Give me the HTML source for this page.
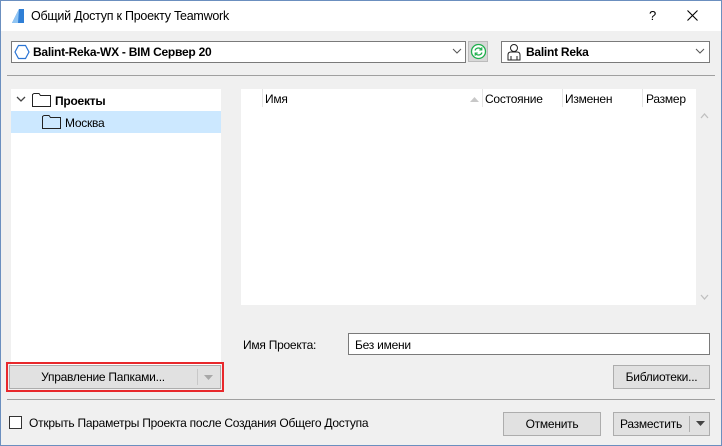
<!DOCTYPE html>
<html><head><meta charset="utf-8"><style>
*{box-sizing:border-box;margin:0;padding:0}
body{width:722px;height:446px;overflow:hidden;background:#f0f0f0;font-family:"Liberation Sans",sans-serif;font-size:12px;color:#000;position:relative;letter-spacing:-0.25px}
.a{position:absolute}
.win{left:0;top:0;width:722px;height:446px;border:1px solid #6b8fbf}
.tb{left:1px;top:1px;width:720px;height:30px;background:#fff}
.combo{background:#fff;border:1px solid #7a7a7a}
.btn{background:#e1e1e1;border:1px solid #adadad;text-align:center;line-height:22px}
.hdr{font-size:12px;top:92px;color:#000}
.div{width:1px;background:#e5e5e5;top:89px;height:18px}
</style></head><body>
<div class="a win"></div>
<div class="a tb"></div>
<svg class="a" style="left:10px;top:8px" width="16" height="16" viewBox="0 0 16 16"><path d="M2 15 L9 1 L14 1 L14 15 Z" fill="#2f7fd6"/><path d="M2 15 L9 1 L8 15Z" fill="#8fc4f3"/></svg>
<div class="a" style="left:31px;top:9px;font-size:12.5px;color:#000">Общий Доступ к Проекту Teamwork</div>
<div class="a" style="left:649px;top:8px;font-size:13px">?</div>
<svg class="a" style="left:687px;top:10px" width="11" height="11"><path d="M0.5 0.5L10.5 10.5M10.5 0.5L0.5 10.5" stroke="#000" stroke-width="1.1"/></svg>

<div class="a combo" style="left:11px;top:41px;width:455px;height:22px"></div>
<svg class="a" style="left:14px;top:44px" width="16" height="16"><path d="M4.5 1.5H11.5L15 8L11.5 14.5H4.5L1 8Z" fill="none" stroke="#2a74d4" stroke-width="1.2"/></svg>
<div class="a" style="left:33px;top:45px;font-weight:bold;font-size:12px">Balint-Reka-WX - BIM Сервер 20</div>
<svg class="a" style="left:452px;top:48px" width="10" height="7"><path d="M1 1L5 5L9 1" fill="none" stroke="#555"/></svg>
<div class="a" style="left:468px;top:41px;width:20px;height:21px;background:#d8d8d8;border:1px solid #bcbcbc"></div>
<svg class="a" style="left:470px;top:43px" width="17" height="17"><circle cx="8.5" cy="8.5" r="7" fill="#fff" stroke="#1fae4c" stroke-width="1.3"/><path d="M5 7.5A3.7 3.7 0 0 1 11.5 6.5M12 9.5A3.7 3.7 0 0 1 5.5 10.5" fill="none" stroke="#1fae4c" stroke-width="1.2"/><path d="M11.8 4.2V7H9.2M5.2 12.8V10H7.8" fill="none" stroke="#1fae4c" stroke-width="1.1"/></svg>
<div class="a combo" style="left:501px;top:41px;width:209px;height:22px"></div>
<svg class="a" style="left:506px;top:43px" width="16" height="18"><circle cx="8" cy="5" r="3.5" fill="none" stroke="#222"/><path d="M2 17V12Q2 9 5 9H11Q14 9 14 12V17Z M5 13V17M11 13V17" fill="none" stroke="#222"/></svg>
<div class="a" style="left:526px;top:45px;font-weight:bold">Balint Reka</div>
<svg class="a" style="left:695px;top:48px" width="10" height="7"><path d="M1 1L5 5L9 1" fill="none" stroke="#555"/></svg>

<div class="a" style="left:7px;top:75px;width:708px;height:1px;background:#a0a0a0"></div>

<div class="a" style="left:11px;top:89px;width:210px;height:298px;background:#fff"></div>
<div class="a" style="left:11px;top:111px;width:210px;height:22px;background:#cce8ff"></div>
<svg class="a" style="left:16px;top:96px" width="10" height="7"><path d="M1 1L5 5L9 1" fill="none" stroke="#444" stroke-width="1.3"/></svg>
<svg class="a" style="left:32px;top:92px" width="19" height="15"><path d="M0.5 2.5V14.5H18.5V3.5H8.5L7 1.5H2Z" fill="none" stroke="#222"/></svg>
<div class="a" style="left:55px;top:94px;font-weight:bold">Проекты</div>
<svg class="a" style="left:42px;top:114px" width="19" height="15"><path d="M0.5 2.5V14.5H18.5V3.5H8.5L7 1.5H2Z" fill="none" stroke="#222"/></svg>
<div class="a" style="left:65px;top:116px">Москва</div>

<div class="a" style="left:241px;top:89px;width:455px;height:216px;background:#fff"></div>
<div class="a" style="left:696px;top:107px;width:17px;height:198px;background:#f0f0f0"></div>
<div class="a div" style="left:262px"></div>
<div class="a div" style="left:482px"></div>
<div class="a div" style="left:562px"></div>
<div class="a div" style="left:642px"></div>
<div class="a hdr" style="left:265px">Имя</div>
<svg class="a" style="left:470px;top:97px" width="9" height="5"><path d="M0 5L4.5 0L9 5Z" fill="#c8c8c8"/></svg>
<div class="a hdr" style="left:485px">Состояние</div>
<div class="a hdr" style="left:565px">Изменен</div>
<div class="a hdr" style="left:646px">Размер</div>
<svg class="a" style="left:700px;top:113px" width="9" height="6"><path d="M1 5L4.5 1L8 5" fill="none" stroke="#c0c0c0" stroke-width="1.3"/></svg>
<svg class="a" style="left:700px;top:294px" width="9" height="6"><path d="M1 1L4.5 5L8 1" fill="none" stroke="#c0c0c0" stroke-width="1.3"/></svg>

<div class="a" style="left:243px;top:338px">Имя Проекта:</div>
<div class="a combo" style="left:348px;top:333px;width:362px;height:22px"></div>
<div class="a" style="left:355px;top:338px">Без имени</div>

<div class="a" style="left:6px;top:362px;width:218px;height:30px;border:2px solid #e8282c"></div>
<div class="a btn" style="left:9px;top:365px;width:212px;height:24px"></div>
<div class="a" style="left:9px;top:370px;width:188px;text-align:center">Управление Папками...</div>
<div class="a" style="left:197px;top:369px;width:1px;height:16px;background:#c8c8c8"></div>
<svg class="a" style="left:204px;top:375px" width="9" height="5"><path d="M0 0H9L4.5 5Z" fill="#a8a8a8"/></svg>
<div class="a btn" style="left:613px;top:365px;width:97px;height:24px">Библиотеки...</div>

<div class="a" style="left:7px;top:399px;width:708px;height:1px;background:#a0a0a0"></div>
<div class="a" style="left:9px;top:416px;width:13px;height:13px;background:#fff;border:1px solid #333"></div>
<div class="a" style="left:29px;top:416px">Открыть Параметры Проекта после Создания Общего Доступа</div>
<div class="a btn" style="left:503px;top:412px;width:98px;height:24px">Отменить</div>
<div class="a btn" style="left:613px;top:412px;width:97px;height:24px"></div>
<div class="a" style="left:613px;top:417px;width:76px;text-align:center">Разместить</div>
<div class="a" style="left:689px;top:416px;width:1px;height:16px;background:#b0b0b0"></div>
<svg class="a" style="left:696px;top:421px" width="9" height="5"><path d="M0 0H9L4.5 5Z" fill="#444"/></svg>
</body></html>
